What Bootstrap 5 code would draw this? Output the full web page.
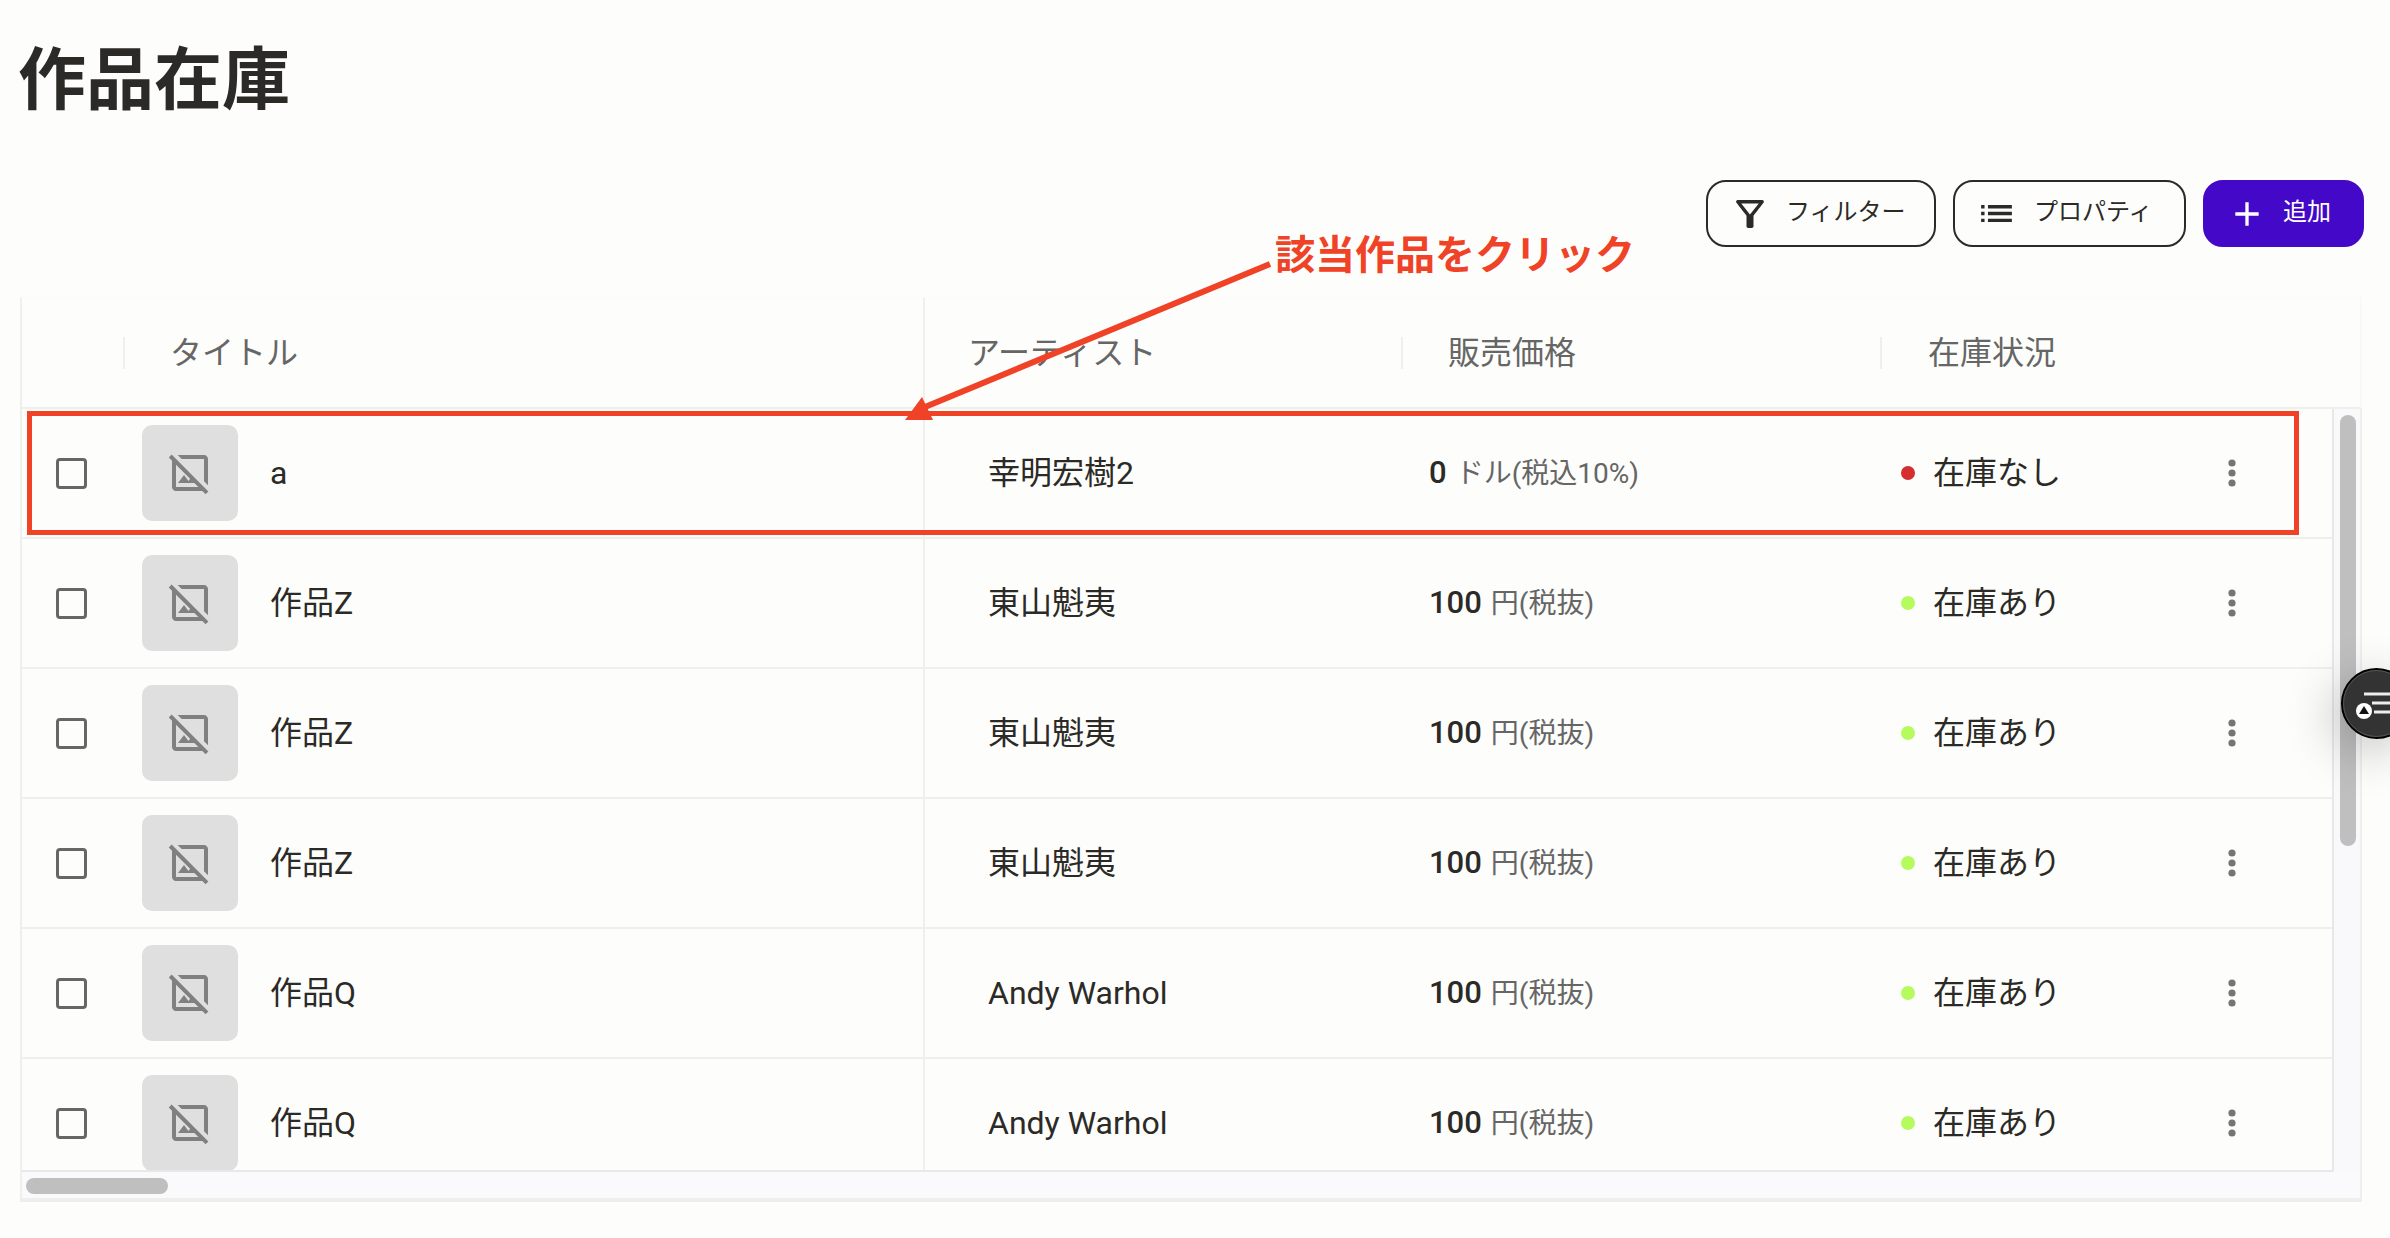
<!DOCTYPE html>
<html lang="ja">
<head>
<meta charset="utf-8">
<title>作品在庫</title>
<link href="https://cdn.jsdelivr.net/npm/bootstrap@5.3.0/dist/css/bootstrap.min.css" rel="stylesheet">
<style>
html,body{height:100%;overflow:hidden}
body{background:#fdfdfb;color:#2b2a26;font-family:Roboto,"Noto Sans CJK JP",sans-serif;font-size:32px;position:relative}
.page-title{font-size:68px;line-height:68px;font-weight:700;margin:0;padding:47px 0 0 18px;color:#2b2a26}
.toolbar{margin-top:65px;padding-right:26px;gap:17px}
.tool-btn{height:67px;display:flex;align-items:center;font-size:24px;line-height:1;border:2px solid #2b2a26;border-radius:20px;background:transparent;color:#2b2a26;padding:0}
.tool-btn svg{display:block;fill:currentColor;flex:none}
.tool-btn span{padding-bottom:3px}
.btn-filter{width:230px;padding-left:21px;gap:15px}
.btn-prop{width:233px;padding-left:21px;gap:17px}
.btn-add{width:161px;padding-left:22px;gap:16px;background:#4408c8;border-color:#4408c8;color:#fff}
.shell{margin:50px 0 0 20px;width:2342px;border-left:2px solid #efefeb;border-bottom:4px solid #eeeeea;border-top:1px solid #fafaf8}
.stock-table{table-layout:fixed;width:2310px;border-collapse:separate;border-spacing:0;margin:0;--bs-table-bg:transparent;color:#2b2a26}
.stock-table th,.stock-table td{padding:0;vertical-align:middle;box-shadow:none;border-bottom:2px solid #efefeb;font-weight:400;background:transparent}
.stock-table td{height:130px;line-height:44px}
.stock-table th{height:109px;color:#666}
.stock-table .col-line{border-right:2px solid #efefeb}
.head-strip{border-bottom:2px solid #efefeb;border-right:2px solid #f9f9f7}
.head-strip .stock-table th{border-bottom:0}
.head-cell{height:32px;line-height:32px;border-left:2px solid #efefeb;white-space:nowrap}
.head-title{padding-left:45px}
.head-artist{padding-left:43px;border-left:0}
.head-price{padding-left:45px}
.head-stock{padding-left:46px}
.lower-part{border-right:2px solid #efefeb}
.body-pane{width:2312px;height:763px;overflow:hidden;border-bottom:2px solid #e8e8e8;border-right:2px solid #e8e8e8}
.v-track{width:26px;background:#f9f9fb;padding:6px 5px 0 6px}
.v-thumb{width:16px;height:431px;border-radius:8px;background:#bfbfbf}
.h-track{height:26px;background:#fafafc;padding:6px 4px}
.h-thumb{width:142px;height:16px;border-radius:8px;background:#bfbfbf}
.form-check-input.stock-check{width:31px;height:31px;margin:0;border:3px solid #666;border-radius:4px;background-color:transparent;flex:none}
.cell-check{padding-left:34px}
.cell-title{padding-left:19px;gap:32px}
.thumb-box{width:96px;height:96px;border-radius:10px;background:#dfdfdf;flex:none}
.thumb-box svg{fill:#808080;display:block}
.cell-artist{padding-left:63px}
.cell-price{padding-left:28px;white-space:nowrap}
.price-num{font-weight:500;font-size:31px}
.price-unit{font-size:28px;color:#666;margin-left:9px}
.cell-stock{padding-left:21px;padding-right:96px}
.stock-dot{width:14px;height:14px;border-radius:50%;margin-right:18px;flex:none}
.dot-out{background:#d32f2f}
.dot-in{background:#b6fb5d}
.kebab{display:block;fill:#757575;margin-left:auto;flex:none}
.markup{position:absolute;left:0;top:0;width:2390px;height:1238px;pointer-events:none}
.callout{position:absolute;left:1275px;top:232px;font-size:40px;line-height:48px;font-weight:700;color:#ef4226;white-space:nowrap}
.float-btn{position:absolute;left:2341px;top:668px;width:71px;height:71px;border-radius:50%;background:#333;border:2px solid #000;outline:1px solid #555;outline-offset:-3px;box-shadow:-8px 12px 50px rgba(0,0,0,.24)}
.float-btn svg{position:absolute;left:-2px;top:-2px;display:block}
</style>
</head>
<body>
<svg width="0" height="0" class="d-none">
<symbol id="ic-hide" viewBox="0 0 24 24"><path d="M19 5v11.17l2 2V5c0-1.1-.9-2-2-2H5.83l2 2H19zM2.81 2.81 1.39 4.22 3 5.83V19c0 1.1.9 2 2 2h13.17l1.61 1.61 1.41-1.41L2.81 2.81zM5 19V7.83l7.07 7.07-.82 1.1L9 13l-3 4h8.17l2 2H5z"/></symbol>
<symbol id="ic-kebab" viewBox="0 0 8 28"><circle cx="4" cy="4" r="3.6"/><circle cx="4" cy="14" r="3.6"/><circle cx="4" cy="24" r="3.6"/></symbol>
</svg>

<h1 class="page-title">作品在庫</h1>

<div class="toolbar d-flex justify-content-end">
  <button type="button" class="btn tool-btn btn-filter">
    <svg width="42" height="42" viewBox="0 0 24 24"><path d="M7 6h10l-5.01 6.3L7 6zm-2.75-.39C6.27 8.2 10 13 10 13v6c0 .55.45 1 1 1h2c.55 0 1-.45 1-1v-6s3.72-4.8 5.74-7.39c.51-.66.04-1.61-.79-1.61H5.04c-.83 0-1.3.95-.79 1.61z"/></svg>
    <span>フィルター</span>
  </button>
  <button type="button" class="btn tool-btn btn-prop">
    <svg width="41" height="41" viewBox="0 0 24 24"><path d="M3 13h2v-2H3v2zm0 4h2v-2H3v2zm0-8h2V7H3v2zm4 4h14v-2H7v2zm0 4h14v-2H7v2zM7 7v2h14V7H7z"/></svg>
    <span>プロパティ</span>
  </button>
  <button type="button" class="btn tool-btn btn-add">
    <svg width="40" height="40" viewBox="0 0 24 24"><path d="M19 13h-6v6h-2v-6H5v-2h6V5h2v6h6v2z"/></svg>
    <span>追加</span>
  </button>
</div>

<div class="shell">
  <div class="head-strip">
    <table class="table stock-table">
      <colgroup><col style="width:101px"><col style="width:802px"><col style="width:476px"><col style="width:479px"><col style="width:452px"></colgroup>
      <thead>
        <tr>
          <th></th>
          <th class="col-line"><div class="head-cell head-title">タイトル</div></th>
          <th><div class="head-cell head-artist">アーティスト</div></th>
          <th><div class="head-cell head-price">販売価格</div></th>
          <th><div class="head-cell head-stock">在庫状況</div></th>
        </tr>
      </thead>
    </table>
  </div>
  <div class="lower-part">
  <div class="d-flex">
    <div class="body-pane">
      <table class="table stock-table">
        <colgroup><col style="width:101px"><col style="width:802px"><col style="width:476px"><col style="width:479px"><col style="width:452px"></colgroup>
        <tbody>
          <tr>
            <td><div class="cell-check d-flex"><input class="form-check-input stock-check" type="checkbox" aria-label="a"></div></td>
            <td class="col-line"><div class="cell-title d-flex align-items-center"><div class="thumb-box d-flex align-items-center justify-content-center"><svg width="48" height="48"><use href="#ic-hide"/></svg></div><span>a</span></div></td>
            <td><div class="cell-artist">幸明宏樹2</div></td>
            <td><div class="cell-price"><span class="price-num">0</span><span class="price-unit">ドル(税込10%)</span></div></td>
            <td><div class="cell-stock d-flex align-items-center"><span class="stock-dot dot-out"></span><span>在庫なし</span><svg class="kebab" width="8" height="28"><use href="#ic-kebab"/></svg></div></td>
          </tr>
          <tr>
            <td><div class="cell-check d-flex"><input class="form-check-input stock-check" type="checkbox" aria-label="作品Z"></div></td>
            <td class="col-line"><div class="cell-title d-flex align-items-center"><div class="thumb-box d-flex align-items-center justify-content-center"><svg width="48" height="48"><use href="#ic-hide"/></svg></div><span>作品Z</span></div></td>
            <td><div class="cell-artist">東山魁夷</div></td>
            <td><div class="cell-price"><span class="price-num">100</span><span class="price-unit">円(税抜)</span></div></td>
            <td><div class="cell-stock d-flex align-items-center"><span class="stock-dot dot-in"></span><span>在庫あり</span><svg class="kebab" width="8" height="28"><use href="#ic-kebab"/></svg></div></td>
          </tr>
          <tr>
            <td><div class="cell-check d-flex"><input class="form-check-input stock-check" type="checkbox" aria-label="作品Z"></div></td>
            <td class="col-line"><div class="cell-title d-flex align-items-center"><div class="thumb-box d-flex align-items-center justify-content-center"><svg width="48" height="48"><use href="#ic-hide"/></svg></div><span>作品Z</span></div></td>
            <td><div class="cell-artist">東山魁夷</div></td>
            <td><div class="cell-price"><span class="price-num">100</span><span class="price-unit">円(税抜)</span></div></td>
            <td><div class="cell-stock d-flex align-items-center"><span class="stock-dot dot-in"></span><span>在庫あり</span><svg class="kebab" width="8" height="28"><use href="#ic-kebab"/></svg></div></td>
          </tr>
          <tr>
            <td><div class="cell-check d-flex"><input class="form-check-input stock-check" type="checkbox" aria-label="作品Z"></div></td>
            <td class="col-line"><div class="cell-title d-flex align-items-center"><div class="thumb-box d-flex align-items-center justify-content-center"><svg width="48" height="48"><use href="#ic-hide"/></svg></div><span>作品Z</span></div></td>
            <td><div class="cell-artist">東山魁夷</div></td>
            <td><div class="cell-price"><span class="price-num">100</span><span class="price-unit">円(税抜)</span></div></td>
            <td><div class="cell-stock d-flex align-items-center"><span class="stock-dot dot-in"></span><span>在庫あり</span><svg class="kebab" width="8" height="28"><use href="#ic-kebab"/></svg></div></td>
          </tr>
          <tr>
            <td><div class="cell-check d-flex"><input class="form-check-input stock-check" type="checkbox" aria-label="作品Q"></div></td>
            <td class="col-line"><div class="cell-title d-flex align-items-center"><div class="thumb-box d-flex align-items-center justify-content-center"><svg width="48" height="48"><use href="#ic-hide"/></svg></div><span>作品Q</span></div></td>
            <td><div class="cell-artist">Andy Warhol</div></td>
            <td><div class="cell-price"><span class="price-num">100</span><span class="price-unit">円(税抜)</span></div></td>
            <td><div class="cell-stock d-flex align-items-center"><span class="stock-dot dot-in"></span><span>在庫あり</span><svg class="kebab" width="8" height="28"><use href="#ic-kebab"/></svg></div></td>
          </tr>
          <tr>
            <td><div class="cell-check d-flex"><input class="form-check-input stock-check" type="checkbox" aria-label="作品Q"></div></td>
            <td class="col-line"><div class="cell-title d-flex align-items-center"><div class="thumb-box d-flex align-items-center justify-content-center"><svg width="48" height="48"><use href="#ic-hide"/></svg></div><span>作品Q</span></div></td>
            <td><div class="cell-artist">Andy Warhol</div></td>
            <td><div class="cell-price"><span class="price-num">100</span><span class="price-unit">円(税抜)</span></div></td>
            <td><div class="cell-stock d-flex align-items-center"><span class="stock-dot dot-in"></span><span>在庫あり</span><svg class="kebab" width="8" height="28"><use href="#ic-kebab"/></svg></div></td>
          </tr>
        </tbody>
      </table>
    </div>
    <div class="v-track"><div class="v-thumb"></div></div>
  </div>
  <div class="h-track"><div class="h-thumb"></div></div>
  </div>
</div>

<svg class="markup" viewBox="0 0 2390 1238">
  <rect x="29.5" y="413.5" width="2267" height="119" fill="none" stroke="#ef4226" stroke-width="5"/>
  <line x1="925" y1="407" x2="1270" y2="264" stroke="#ef4226" stroke-width="6"/>
  <polygon points="922,397 905,420 933,420" fill="#ef4226"/>
</svg>
<div class="callout">該当作品をクリック</div>
<div class="float-btn">
  <svg width="71" height="71" viewBox="0 0 71 71">
    <path d="M23 26h26M31 35h18M33 44h16" stroke="#eee" stroke-width="3" fill="none"/>
    <circle cx="23" cy="43" r="8" fill="#fff"/>
    <polygon points="23,38 28,46 18,46" fill="#111"/>
  </svg>
</div>
<script src="https://cdn.jsdelivr.net/npm/bootstrap@5.3.0/dist/js/bootstrap.bundle.min.js"></script>
</body>
</html>
